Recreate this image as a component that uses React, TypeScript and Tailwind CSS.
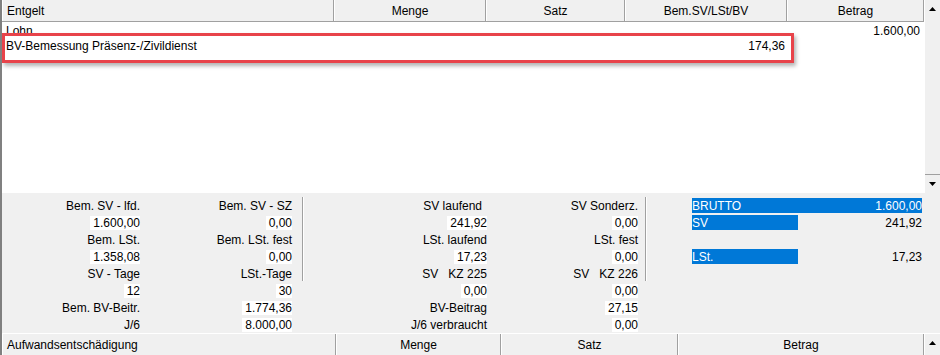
import React from "react";

const font = { fontFamily: '"Liberation Sans", Arial, sans-serif' };

function ArrowUp() {
  return (
    <svg width="7" height="4" viewBox="0 0 7 4">
      <path d="M0 4 L3.5 0 L7 4 Z" fill="#000" />
    </svg>
  );
}

function ArrowDown() {
  return (
    <svg width="7" height="4" viewBox="0 0 7 4">
      <path d="M0 0 L3.5 4 L7 0 Z" fill="#000" />
    </svg>
  );
}

function HeaderCell({ label, w, left }: { label: string; w: string; left?: boolean }) {
  return (
    <div
      className={`${w} h-full flex items-center border-r border-r-[#a0a0a0] border-l border-l-white ${
        left ? "justify-start pl-[4px]" : "justify-center"
      }`}
    >
      {label}
    </div>
  );
}

type Cell = { t: string; v?: boolean; pre?: boolean };

const col1: Cell[] = [
  { t: "Bem. SV - lfd." },
  { t: "1.600,00", v: true },
  { t: "Bem. LSt." },
  { t: "1.358,08", v: true },
  { t: "SV - Tage" },
  { t: "12", v: true },
  { t: "Bem. BV-Beitr." },
  { t: "J/6" },
];
const col2: Cell[] = [
  { t: "Bem. SV - SZ" },
  { t: "0,00", v: true },
  { t: "Bem. LSt. fest" },
  { t: "0,00", v: true },
  { t: "LSt.-Tage" },
  { t: "30", v: true },
  { t: "1.774,36", v: true },
  { t: "8.000,00", v: true },
];
const col3: Cell[] = [
  { t: "SV laufend", pre: true },
  { t: "241,92", v: true },
  { t: "LSt. laufend" },
  { t: "17,23", v: true },
  { t: "SV   KZ 225", pre: true },
  { t: "0,00", v: true },
  { t: "BV-Beitrag" },
  { t: "J/6 verbraucht" },
];
const col4: Cell[] = [
  { t: "SV Sonderz." },
  { t: "0,00", v: true },
  { t: "LSt. fest" },
  { t: "0,00", v: true },
  { t: "SV   KZ 226", pre: true },
  { t: "0,00", v: true },
  { t: "27,15", v: true },
  { t: "0,00", v: true },
];

function Column({ cells, w, extra }: { cells: Cell[]; w: string; extra?: string }) {
  return (
    <div className={`${w} flex flex-col ${extra ?? ""}`}>
      {cells.map((c, i) => (
        <div key={i} className="h-[17px] flex items-center justify-end">
          <span
            className={`${c.v ? "bg-white pl-[3px] leading-[14px]" : ""} ${
              c.pre ? "whitespace-pre" : ""
            } ${i === 0 && c.pre ? "pr-[5px]" : ""}`}
          >
            {c.t}
          </span>
        </div>
      ))}
    </div>
  );
}

function Divider() {
  return (
    <div className="self-start h-[84px] flex">
      <div className="w-px h-full bg-[#a0a0a0]" />
      <div className="w-px h-full bg-white" />
    </div>
  );
}

export default function App() {
  return (
    <div
      className="w-[940px] h-[355px] flex flex-col bg-[#f0f0f0] text-[12px] text-black border-l-2 border-l-[#808080] relative overflow-hidden"
      style={font}
    >
      {/* top grid */}
      <div className="h-[193px] flex">
        <div className="w-[922px] flex flex-col bg-white">
          <div className="h-[22px] flex bg-[#f0f0f0] border-b border-b-[#a0a0a0]">
            <HeaderCell label="Entgelt" w="w-[332px]" left />
            <HeaderCell label="Menge" w="w-[152px]" />
            <HeaderCell label="Satz" w="w-[139px]" />
            <HeaderCell label="Bem.SV/LSt/BV" w="w-[162px]" />
            <HeaderCell label="Betrag" w="w-[137px]" />
          </div>
          <div className="flex flex-col pt-px">
            <div className="h-[15px] flex items-center">
              <div className="w-[332px] pl-[4px]">Lohn</div>
              <div className="flex-1 text-right pr-[4px]">1.600,00</div>
            </div>
            <div className="h-[15px] flex items-center">
              <div className="w-[332px] pl-[4px]">BV-Bemessung Präsenz-/Zivildienst</div>
              <div className="w-[452px] text-right pr-[1px]">174,36</div>
            </div>
          </div>
        </div>
        <div className="w-[16px] flex flex-col bg-[#f0f0f0] border-l border-l-white">
          <div className="h-[17px] flex items-center justify-center">
            <ArrowUp />
          </div>
          <div className="flex-1" />
          <div className="h-[19px] flex items-center justify-center border-t border-t-[#a0a0a0]">
            <ArrowDown />
          </div>
        </div>
      </div>

      {/* summary panel */}
      <div className="h-[140px] flex pt-[4px]">
        <Column cells={col1} w="w-[138px]" />
        <Column cells={col2} w="w-[152px]" />
        <div className="w-[10px]" />
        <Divider />
        <Column cells={col3} w="w-[183px]" />
        <Column cells={col4} w="w-[151px]" />
        <div className="w-[7px]" />
        <Divider />
        <div className="ml-[45px] w-[230px] flex flex-col pt-px">
          <div className="h-[15px] flex items-center justify-between bg-[#0078d7] text-white">
            <span>BRUTTO</span>
            <span>1.600,00</span>
          </div>
          <div className="h-[2px]" />
          <div className="h-[15px] flex items-center justify-between">
            <span className="w-[106px] h-full bg-[#0078d7] text-white flex items-center">SV</span>
            <span>241,92</span>
          </div>
          <div className="h-[19px]" />
          <div className="h-[15px] flex items-center justify-between">
            <span className="w-[106px] h-full bg-[#0078d7] text-white flex items-center">LSt.</span>
            <span>17,23</span>
          </div>
        </div>
      </div>

      {/* bottom grid header */}
      <div className="h-[22px] flex border-t border-t-white">
        <div className="w-[922px] flex">
          <HeaderCell label="Aufwandsentschädigung" w="w-[334px]" left />
          <HeaderCell label="Menge" w="w-[165px]" />
          <HeaderCell label="Satz" w="w-[177px]" />
          <HeaderCell label="Betrag" w="w-[246px]" />
        </div>
        <div className="w-[16px] flex flex-col border-l border-l-white">
          <div className="h-[17px] flex items-center justify-center">
            <ArrowUp />
          </div>
        </div>
      </div>

      {/* annotation */}
      <div className="absolute left-0 top-[33px] w-[792px] h-[30px] border-[3px] border-[#e8434a] shadow-[2px_3px_4px_rgba(0,0,0,0.3)] pointer-events-none" />
    </div>
  );
}
